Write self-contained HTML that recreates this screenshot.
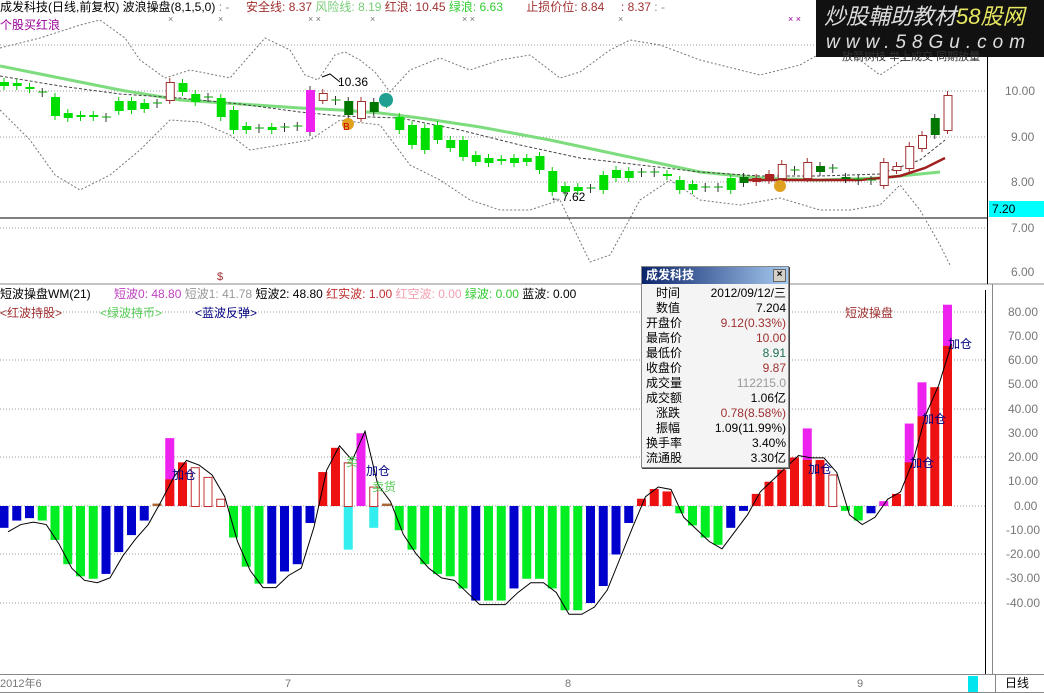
<!DOCTYPE html>
<html><head><meta charset="utf-8"><style>
body{margin:0;width:1044px;height:693px;overflow:hidden;background:#fff;font-family:"Liberation Sans","Noto Sans CJK SC",sans-serif;position:relative}
.t{position:absolute;font-size:12px;white-space:nowrap;line-height:14px}
svg{position:absolute;left:0;top:0}
</style></head><body>
<svg id="s" width="1044" height="693" xmlns="http://www.w3.org/2000/svg">
<g id="grid" stroke="#999" stroke-dasharray="1,2" stroke-width="1">
<line x1="0" y1="45" x2="986" y2="45"/><line x1="0" y1="91" x2="986" y2="91"/><line x1="0" y1="137" x2="986" y2="137"/><line x1="0" y1="182" x2="986" y2="182"/><line x1="0" y1="228" x2="986" y2="228"/>
<line x1="0" y1="312" x2="986" y2="312"/><line x1="0" y1="360" x2="986" y2="360"/><line x1="0" y1="409" x2="986" y2="409"/><line x1="0" y1="457" x2="986" y2="457"/><line x1="0" y1="506" x2="986" y2="506"/><line x1="0" y1="554" x2="986" y2="554"/><line x1="0" y1="603" x2="986" y2="603"/>
</g>
<line x1="0" y1="218" x2="988" y2="218" stroke="#000"/>
<line x1="0" y1="284" x2="1044" y2="284" stroke="#888"/>
<line x1="987.5" y1="0" x2="987.5" y2="284" stroke="#000"/>
<line x1="985.5" y1="290" x2="985.5" y2="674" stroke="#000"/>
<line x1="992.5" y1="284" x2="992.5" y2="674" stroke="#888"/>
<line x1="0" y1="674.5" x2="1044" y2="674.5" stroke="#888"/>
<line x1="0" y1="692.5" x2="1044" y2="692.5" stroke="#888"/>
<line x1="995.5" y1="675" x2="995.5" y2="693" stroke="#888"/>
<rect x="989" y="201" width="55" height="16" fill="#00ffff"/>
<rect x="968" y="676" width="10" height="16" fill="#00e5ee"/>
<polyline fill="none" stroke="#7ddc7d" stroke-width="3" points="0,66 60,78 120,90 180,100 240,104 300,108 340,110 380,113 420,118 480,127 550,140 620,155 700,172 760,178 820,180 880,178 940,172"/>
<polyline fill="none" stroke="#a02020" stroke-width="2.5" points="740,180 800,180 860,180 900,176 925,168 945,158"/>
<polyline fill="none" stroke="#444" stroke-dasharray="3,2" points="0,76 60,86 120,94 180,98 240,104 300,112 340,116 400,118 460,130 520,145 580,158 640,165 700,172 760,176 820,176 880,174 920,160 945,140"/>
<polyline fill="none" stroke="#777" stroke-dasharray="2,2" points="0,48 40,38 80,25 100,20 125,38 140,60 165,78 190,70 230,78 250,55 265,38 290,50 305,75 318,80 335,55 345,52 360,60 375,72 390,92 410,70 440,58 470,70 500,60 530,55 560,78 580,72 610,50 630,40 660,45 700,60 760,75 800,65 830,48 860,60 880,75 900,62 925,40 945,30"/>
<polyline fill="none" stroke="#777" stroke-dasharray="2,2" points="0,110 30,140 55,175 80,190 110,175 140,150 170,120 200,122 230,135 250,150 280,145 310,140 340,120 380,125 410,165 440,180 470,200 500,210 530,210 560,200 590,262 610,255 640,200 670,180 700,200 740,205 780,198 820,210 850,210 880,205 900,185 920,210 940,245 950,265"/>
<g id="candles"></g>
<g id="bars"></g>
<text x="550" y="201" font-size="12" font-family="Liberation Sans">←7.62</text>
<path d="M322,77 L330,74 L340,82" stroke="#000" fill="none"/>
<text x="338" y="86" font-size="12" font-family="Liberation Sans">10.36</text>
<circle cx="386" cy="100" r="7" fill="#20a090"/>
<circle cx="348" cy="124" r="6" fill="#e0a020"/><text x="343" y="130" font-size="10" fill="#c00">B</text>
<circle cx="780" cy="186" r="6" fill="#e0a020"/>
<rect x="816" y="0" width="228" height="57" fill="#111"/>
</svg>
<div class="t" style="left:0;top:1"><span>成发科技(日线,前复权) 波浪操盘(8,1,5,0)</span> <span style="color:#888">: -</span>&nbsp;&nbsp;&nbsp;&nbsp; <span style="color:#a03030">安全线: 8.37</span> <span style="color:#7c7">风险线: 8.19</span> <span style="color:#a03030">红浪: 10.45</span> <span style="color:#3c3">绿浪: 6.63</span> &nbsp;&nbsp;&nbsp;&nbsp;&nbsp;&nbsp;<span style="color:#a03030">止损价位: 8.84</span> &nbsp;&nbsp;&nbsp;&nbsp;<span style="color:#a03030">: 8.37</span> <span style="color:#888">: -</span></div>
<div class="t" style="left:0;color:#909;font-size:12px;top:18px">个股买红浪</div>
<div class="t" style="left:168px;top:12px;font-size:9px;color:#777">×</div>
<div class="t" style="left:218px;top:12px;font-size:9px;color:#777">×</div>
<div class="t" style="left:308px;top:12px;font-size:9px;color:#777">× ×</div>
<div class="t" style="left:370px;top:12px;font-size:9px;color:#777">×</div>
<div class="t" style="left:462px;top:12px;font-size:9px;color:#777">× ×</div>
<div class="t" style="left:618px;top:12px;font-size:9px;color:#777">×</div>
<div class="t" style="left:788px;top:12px;font-size:9px;color:#909">× ×</div>
<div class="t" style="left:824px;top:5px;font-size:22px;line-height:24px;color:#ddd;font-style:italic;letter-spacing:0px">炒股輔助教材<span style="color:#e8e860">58股网</span></div>
<div class="t" style="left:826px;top:32px;font-size:19px;line-height:22px;color:#ddd;font-style:italic;letter-spacing:6px">www.58Gu.com</div>
<div class="t" style="left:842px;top:50px;font-size:11px;color:#333">放箭树枝 举上成交 同期放量</div>
<div class="t" style="left:1005px;top:84px;color:#777">10.00</div>
<div class="t" style="left:1011px;top:130px;color:#777">9.00</div>
<div class="t" style="left:1011px;top:175px;color:#777">8.00</div>
<div class="t" style="left:992px;top:202px;color:#000">7.20</div>
<div class="t" style="left:1011px;top:221px;color:#777">7.00</div>
<div class="t" style="left:1011px;top:265px;color:#777">6.00</div>
<div class="t" style="left:1008px;top:305px;color:#777">80.00</div>
<div class="t" style="left:1008px;top:329px;color:#777">70.00</div>
<div class="t" style="left:1008px;top:353px;color:#777">60.00</div>
<div class="t" style="left:1008px;top:377px;color:#777">50.00</div>
<div class="t" style="left:1008px;top:402px;color:#777">40.00</div>
<div class="t" style="left:1008px;top:426px;color:#777">30.00</div>
<div class="t" style="left:1008px;top:450px;color:#777">20.00</div>
<div class="t" style="left:1008px;top:474px;color:#777">10.00</div>
<div class="t" style="left:1014px;top:499px;color:#777">0.00</div>
<div class="t" style="left:1006px;top:523px;color:#777">-10.00</div>
<div class="t" style="left:1006px;top:547px;color:#777">-20.00</div>
<div class="t" style="left:1006px;top:571px;color:#777">-30.00</div>
<div class="t" style="left:1006px;top:596px;color:#777">-40.00</div>
<div class="t" style="left:217px;top:270px;color:#a03030;font-size:11px">$</div>
<div class="t" style="left:0;top:287px">短波操盘WM(21) &nbsp;&nbsp;&nbsp;&nbsp;&nbsp;&nbsp;<span style="color:#c040c0">短波0: 48.80</span> <span style="color:#999">短波1: 41.78</span> 短波2: 48.80 <span style="color:#c03030">红实波: 1.00</span> <span style="color:#f0a0b0">红空波: 0.00</span> <span style="color:#3c3">绿波: 0.00</span> 蓝波: 0.00</div>
<div class="t" style="left:0;top:306px;color:#a03030">&lt;红波持股&gt;</div>
<div class="t" style="left:100px;top:306px;color:#5c5">&lt;绿波持币&gt;</div>
<div class="t" style="left:195px;top:306px;color:#000080">&lt;蓝波反弹&gt;</div>
<div class="t" style="left:845px;top:306px;color:#a03030">短波操盘</div>
<div class="t" style="left:172px;top:468px;color:#000080">加仓</div>
<div class="t" style="left:366px;top:464px;color:#000080">加仓</div>
<div class="t" style="left:372px;top:480px;color:#5c5">卖货</div>
<div class="t" style="left:346px;top:455px;color:#5c5">卖</div>
<div class="t" style="left:808px;top:462px;color:#000080">加仓</div>
<div class="t" style="left:910px;top:456px;color:#000080">加仓</div>
<div class="t" style="left:922px;top:412px;color:#000080">加仓</div>
<div class="t" style="left:948px;top:337px;color:#000080">加仓</div>
<div class="t" style="left:0;top:677px;color:#777;font-size:11px">2012年6</div>
<div class="t" style="left:285px;top:677px;color:#777;font-size:11px">7</div>
<div class="t" style="left:565px;top:677px;color:#777;font-size:11px">8</div>
<div class="t" style="left:857px;top:677px;color:#777;font-size:11px">9</div>
<div class="t" style="left:1005px;top:676px">日线</div>
<div style="position:absolute;left:641px;top:266px;width:146px;height:200px;background:#f4f4f4;border:1px solid #888;box-shadow:1px 1px 0 #444">
<div style="height:17px;background:linear-gradient(90deg,#0a246a,#a6caf0);color:#fff;font-weight:bold;font-size:12px;line-height:17px;padding-left:4px">成发科技<span style="position:absolute;right:2px;top:2px;width:11px;height:11px;background:#d4d0c8;border:1px solid #666;color:#000;font-size:10px;line-height:10px;text-align:center">×</span></div>
<div style="font-size:12px;line-height:15px;padding-top:2px">
<div style="display:flex;justify-content:space-between;padding:0 2px 0 4px"><span>&nbsp;&nbsp;&nbsp;时间</span><span>2012/09/12/三</span></div>
<div style="display:flex;justify-content:space-between;padding:0 2px 0 4px"><span>&nbsp;&nbsp;&nbsp;数值</span><span>7.204</span></div>
<div style="display:flex;justify-content:space-between;padding:0 2px 0 4px"><span>开盘价</span><span style="color:#a03030">9.12(0.33%)</span></div>
<div style="display:flex;justify-content:space-between;padding:0 2px 0 4px"><span>最高价</span><span style="color:#a03030">10.00</span></div>
<div style="display:flex;justify-content:space-between;padding:0 2px 0 4px"><span>最低价</span><span style="color:#207050">8.91</span></div>
<div style="display:flex;justify-content:space-between;padding:0 2px 0 4px"><span>收盘价</span><span style="color:#a03030">9.87</span></div>
<div style="display:flex;justify-content:space-between;padding:0 2px 0 4px"><span>成交量</span><span style="color:#999">112215.0</span></div>
<div style="display:flex;justify-content:space-between;padding:0 2px 0 4px"><span>成交额</span><span>1.06亿</span></div>
<div style="display:flex;justify-content:space-between;padding:0 2px 0 4px"><span>&nbsp;&nbsp;&nbsp;涨跌</span><span style="color:#a03030">0.78(8.58%)</span></div>
<div style="display:flex;justify-content:space-between;padding:0 2px 0 4px"><span>&nbsp;&nbsp;&nbsp;振幅</span><span>1.09(11.99%)</span></div>
<div style="display:flex;justify-content:space-between;padding:0 2px 0 4px"><span>换手率</span><span>3.40%</span></div>
<div style="display:flex;justify-content:space-between;padding:0 2px 0 4px"><span>流通股</span><span>3.30亿</span></div>
</div></div>
<script>
var NS="http://www.w3.org/2000/svg";
function el(p,n,a){var e=document.createElementNS(NS,n);for(var k in a)e.setAttribute(k,a[k]);p.appendChild(e);return e;}
var bars=[[-9,'b'],[-6,'b'],[-5,'b'],[-6,'g'],[-14,'g'],[-24,'g'],[-29,'g'],[-30,'g'],[-28,'b'],[-19,'b'],[-12,'b'],[-6,'b'],[1,'o'],[11,'r',28],[18,'r'],[16,'h'],[12,'h'],[3,'h'],[-13,'g'],[-25,'g'],[-32,'g'],[-32,'b'],[-27,'b'],[-24,'b'],[-7,'b'],[14,'r'],[24,'r'],[18,'h',0,-18],[30,'m'],[8,'h',0,-9],[1,'o'],[-10,'g'],[-18,'g'],[-24,'g'],[-28,'g'],[-29,'g'],[-34,'g'],[-39,'b'],[-39,'g'],[-39,'g'],[-34,'b'],[-30,'g'],[-30,'g'],[-34,'g'],[-43,'g'],[-43,'g'],[-40,'b'],[-33,'b'],[-20,'b'],[-7,'b'],[3,'r'],[7,'r'],[6,'r'],[-3,'g'],[-8,'g'],[-13,'g'],[-16,'g'],[-9,'b'],[-2,'b'],[5,'r'],[10,'r'],[15,'r'],[20,'r'],[19,'r',32],[19,'r'],[13,'h'],[-2,'g'],[-6,'g'],[-3,'b'],[2,'m'],[5,'r'],[18,'r',34],[37,'r',51],[49,'r'],[66,'r',83]];
var g=document.getElementById('bars'),Z=506,S=2.425,pts=[];
var col={b:'#0000cc',g:'#00ee22',r:'#ee1111',o:'#aa6633',m:'#ee22ee'};
bars.forEach(function(b,i){var x=4+12.75*i-4.5,w=9,v=b[0];
 if(b[2])el(g,'rect',{x:x,y:Z-b[2]*S,width:w,height:b[2]*S,fill:'#ee22ee'});
 if(b[3])el(g,'rect',{x:x,y:Z,width:w,height:-b[3]*S,fill:'#33eeee'});
 var y=v>0?Z-v*S:Z,h=Math.abs(v)*S;
 if(b[1]=='h')el(g,'rect',{x:x+.5,y:y+.5,width:w-1,height:h,fill:'#fff',stroke:'#c03030'});
 else el(g,'rect',{x:x,y:y,width:w,height:Math.max(h,1),fill:col[b[1]]});
 pts.push((x+w/2+4)+','+(Z-v*S+(v>0?-2:4)));
});
el(g,'polyline',{points:pts.join(' '),fill:'none',stroke:'#000','stroke-width':1});
var c=[[82,86,'g'],[83,86,'g'],[87,89,'g'],[92,93,'x'],[97,116,'g'],[113,118,'g'],[115,117,'g'],[115,117,'g'],[117,118,'x'],[101,111,'g'],[101,110,'g'],[103,109,'g'],[103,104,'x'],[82,100,'h'],[83,92,'g'],[94,102,'g'],[97,98,'x'],[98,117,'g'],[110,130,'g'],[126,130,'g'],[128,129,'x'],[127,130,'g'],[127,128,'x'],[126,127,'x'],[90,132,'m'],[93,100,'h'],[100,101,'x'],[101,115,'d'],[101,118,'h'],[102,112,'d'],[98,104,'g'],[117,130,'g'],[125,145,'g'],[128,150,'g'],[125,140,'g'],[140,148,'g'],[140,157,'g'],[155,162,'g'],[158,163,'g'],[159,161,'g'],[158,163,'g'],[158,162,'g'],[156,170,'g'],[171,192,'g'],[186,192,'g'],[187,191,'g'],[188,189,'x'],[175,190,'g'],[170,178,'g'],[171,178,'g'],[172,173,'x'],[172,173,'x'],[174,176,'g'],[180,190,'g'],[184,190,'g'],[187,188,'x'],[187,188,'x'],[178,190,'g'],[177,183,'d'],[178,182,'r'],[174,180,'r'],[164,178,'h'],[170,171,'x'],[162,178,'h'],[166,172,'d'],[168,169,'x'],[177,179,'d'],[179,181,'x'],[180,181,'x'],[162,185,'h'],[166,170,'h'],[146,168,'h'],[135,148,'h'],[118,135,'d'],[95,130,'h']];
var cg=document.getElementById('candles');
var cc={g:'#00dd00',d:'#007700',r:'#aa2222',m:'#ee22ee',x:'#333'};
c.forEach(function(k,i){var cx=4+12.75*i,x=cx-4;
 el(cg,'line',{x1:cx,y1:k[0]-4,x2:cx,y2:k[1]+4,stroke:k[2]=='g'?'#00cc00':(k[2]=='h'||k[2]=='r'?'#a03030':'#333')});
 if(k[2]=='h')el(cg,'rect',{x:x+.5,y:k[0]+.5,width:8,height:k[1]-k[0],fill:'#fff',stroke:'#a03030'});
 else if(k[2]=='x')el(cg,'line',{x1:x,y1:k[0],x2:x+9,y2:k[0],stroke:'#00aa00'});
 else el(cg,'rect',{x:x,y:k[0],width:9,height:k[1]-k[0],fill:cc[k[2]]});
});
</script>
</body></html>
